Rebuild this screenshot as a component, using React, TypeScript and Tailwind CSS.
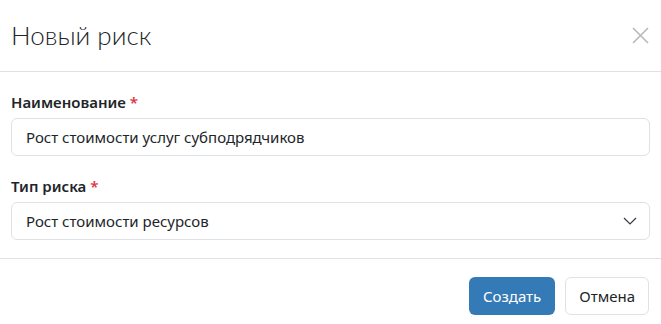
import React from 'react';

export default function App() {
  return (
    <div className="w-[661px] h-[324px] bg-white overflow-hidden text-[#212529]" style={{ fontFamily: '"Noto Sans", "Open Sans", sans-serif' }}>
      {/* Header */}
      <div className="h-[72px] border-b border-[#dee2e6] flex items-center justify-between pl-[11px] pr-[12px]">
        <h3 className="text-[26px] font-light leading-none text-[#212529] pb-[2px]" style={{ fontFamily: 'Lato, "Open Sans", sans-serif' }}>Новый риск</h3>
        <button className="text-[#b9b9b9]">
          <svg width="17" height="17" viewBox="0 0 17 17" fill="none" stroke="currentColor" strokeWidth="1.6">
            <path d="M1 1L16 16M16 1L1 16" />
          </svg>
        </button>
      </div>

      {/* Body */}
      <div className="px-[11px] pt-[20px] pb-[18px] space-y-[20px] border-b border-[#dee2e6]">
        <div>
          <label className="block text-[15px] font-semibold leading-[20px] mb-[6px]">
            Наименование <span className="text-[#dc3545]">*</span>
          </label>
          <input
            type="text"
            defaultValue="Рост стоимости услуг субподрядчиков"
            className="w-full h-[38px] border border-[#dee2e6] rounded-[6px] px-[14px] text-[15px] outline-none"
          />
        </div>
        <div>
          <label className="block text-[15px] font-semibold leading-[20px] mb-[6px]">
            Тип риска <span className="text-[#dc3545]">*</span>
          </label>
          <div className="w-full h-[38px] border border-[#dee2e6] rounded-[6px] pl-[14px] pr-[12px] text-[15px] flex items-center justify-between">
            <span>Рост стоимости ресурсов</span>
            <svg width="14" height="8" viewBox="0 0 14 8" fill="none" stroke="#343a40" strokeWidth="1.2">
              <path d="M1 1L7 7L13 1" />
            </svg>
          </div>
        </div>
      </div>

      {/* Footer */}
      <div className="flex justify-end gap-[10px] pt-[18px] pr-[12px]">
        <button className="h-[38px] px-[14px] rounded-[6px] bg-[#337ab7] text-white text-[15px]">Создать</button>
        <button className="h-[38px] px-[13px] rounded-[6px] border border-[#dee2e6] bg-white text-[#212529] text-[15px]">Отмена</button>
      </div>
    </div>
  );
}
